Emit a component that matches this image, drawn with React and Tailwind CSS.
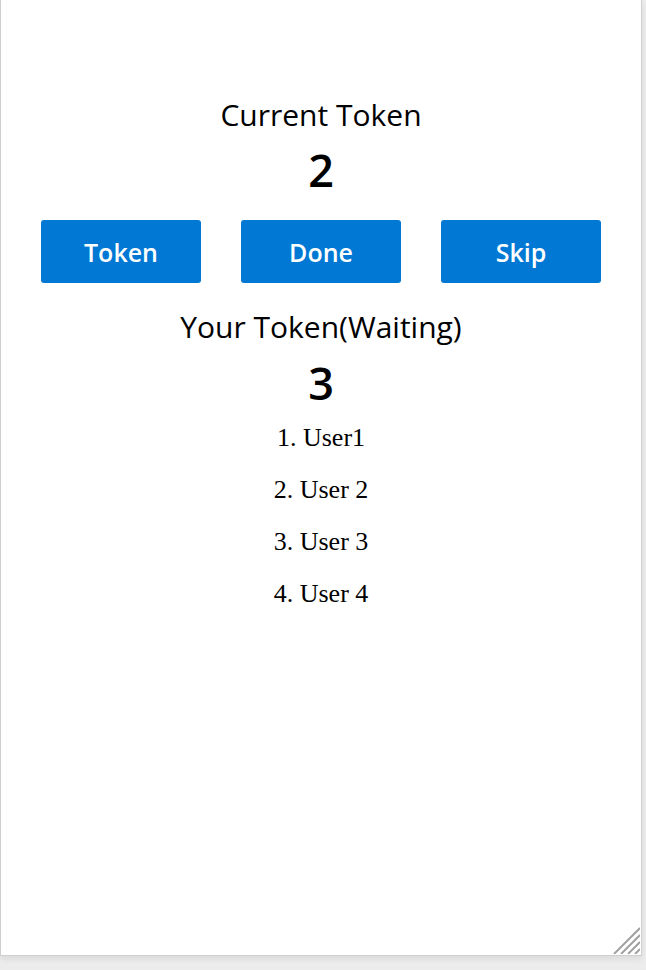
import React from "react";

export default function App() {
  const users = ["User1", "User 2", "User 3", "User 4"];
  return (
    <div className="w-[646px] h-[970px] bg-[#ececec] relative overflow-hidden">
      <div className="w-[642px] h-[956px] bg-white border-l border-r border-b border-[#cfcfcf] relative shadow-[0_3px_6px_rgba(0,0,0,0.08)]">
        <div className="flex flex-col items-center pt-[97px] text-black">
          <div className="text-[30px] leading-[36px] font-['Open_Sans',sans-serif]">Current Token</div>
          <div className="mt-[13px] text-[45px] leading-[48px] font-semibold font-['Open_Sans',sans-serif]">2</div>
          <div className="mt-[26px] w-full flex justify-evenly">
            {["Token", "Done", "Skip"].map((t) => (
              <button
                key={t}
                className="w-[160px] h-[63px] pt-[3px] bg-[#0078d4] rounded-[3px] text-white text-[25px] font-semibold font-['Open_Sans',sans-serif]"
              >
                {t}
              </button>
            ))}
          </div>
          <div className="mt-[26px] text-[30px] leading-[36px] font-['Open_Sans',sans-serif]">Your Token(Waiting)</div>
          <div className="mt-[14px] text-[45px] leading-[48px] font-semibold font-['Open_Sans',sans-serif]">3</div>
          <ol className="mt-[5px] list-decimal list-inside text-center font-['Liberation_Serif',serif] text-[26px]">
            {users.map((u) => (
              <li key={u} className="leading-[52px]">{u}</li>
            ))}
          </ol>
        </div>
        <svg className="absolute right-[1px] bottom-[1px]" width="28" height="28" viewBox="0 0 28 28">
          <line x1="28" y1="2" x2="2" y2="28" stroke="#a0a0a0" strokeWidth="2" />
          <line x1="28" y1="9" x2="9" y2="28" stroke="#a0a0a0" strokeWidth="2" />
          <line x1="28" y1="16" x2="16" y2="28" stroke="#a0a0a0" strokeWidth="2" />
          <line x1="28" y1="23" x2="23" y2="28" stroke="#a0a0a0" strokeWidth="2" />
        </svg>
      </div>
    </div>
  );
}
